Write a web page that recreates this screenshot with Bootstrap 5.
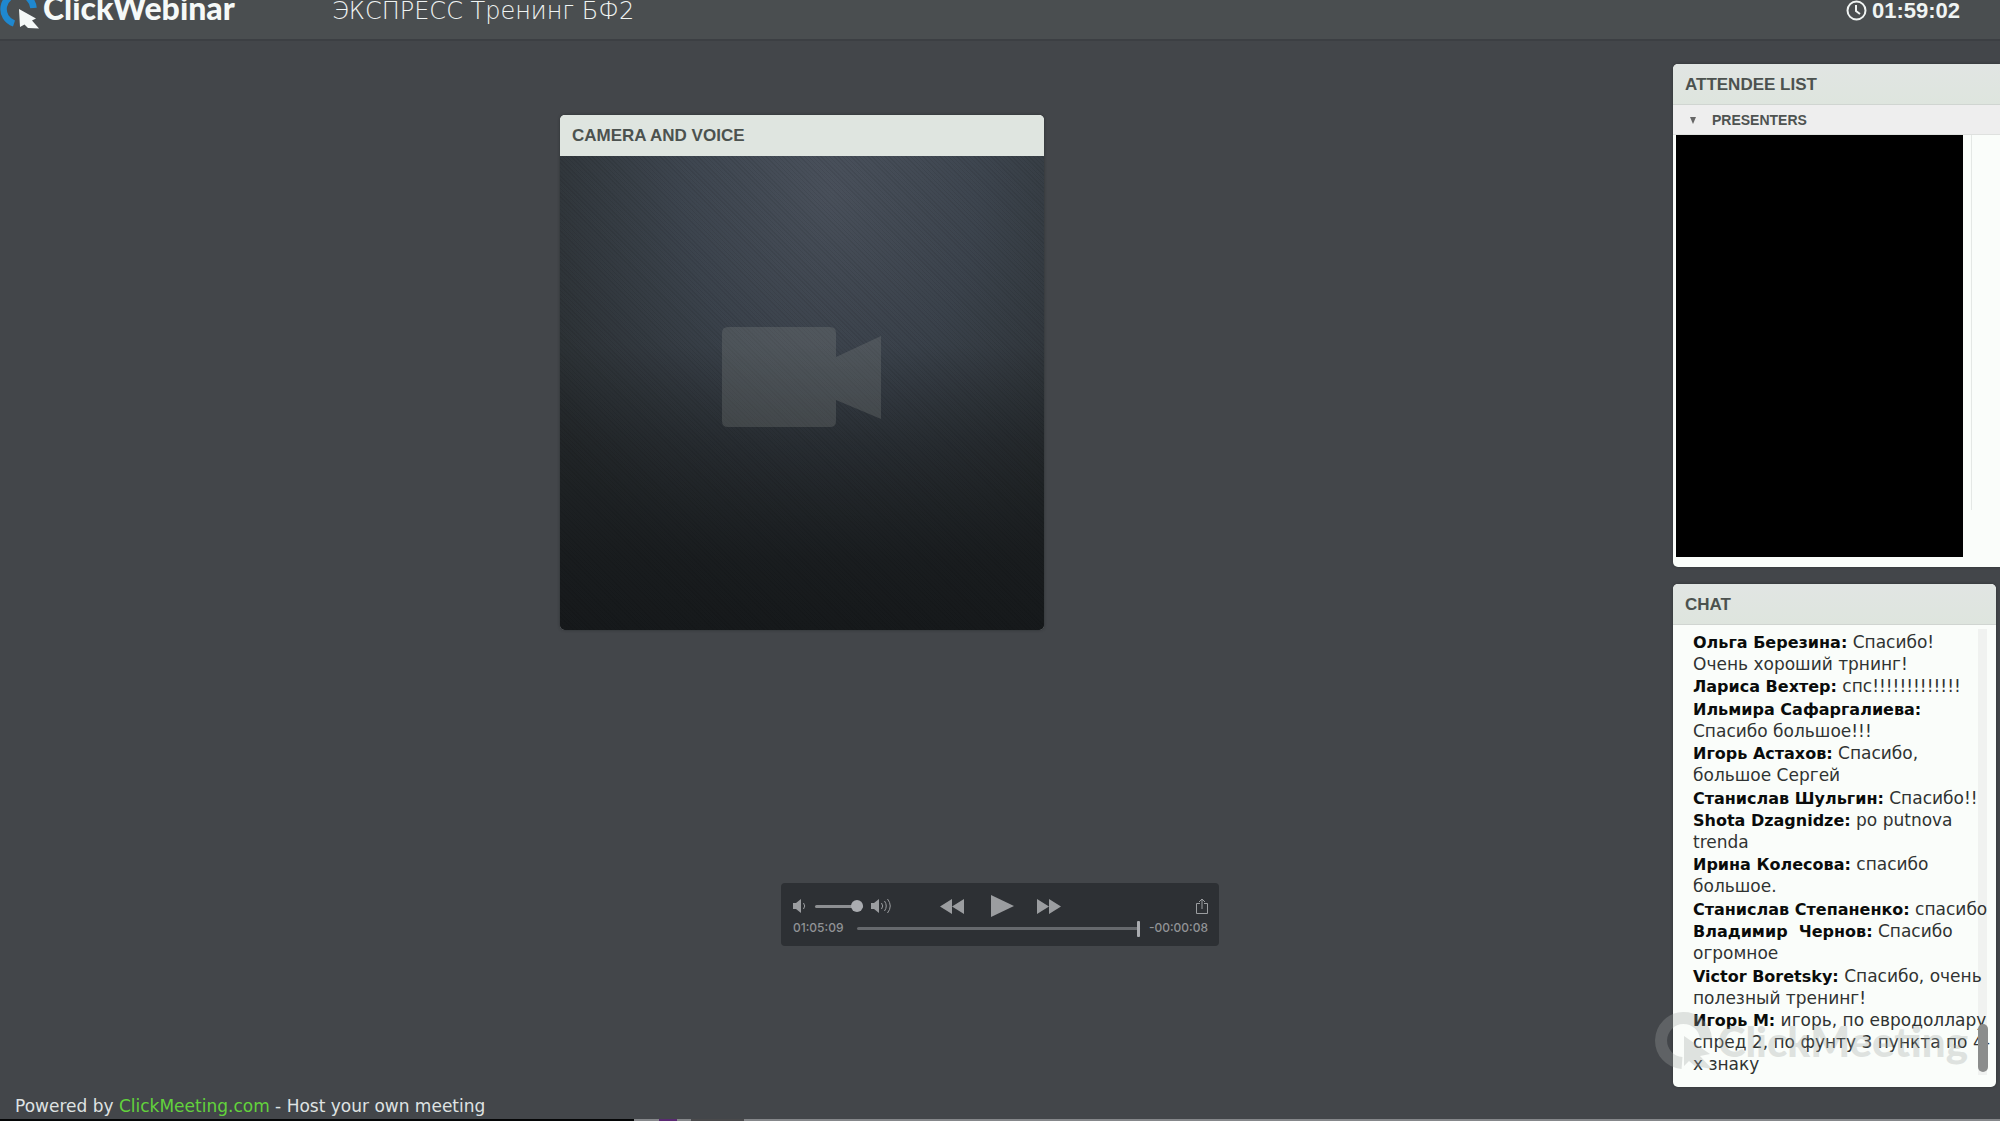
<!DOCTYPE html>
<html lang="ru">
<head>
<meta charset="utf-8">
<meta name="viewport" content="width=device-width, initial-scale=1">
<title>ClickWebinar</title>
<link href="https://cdn.jsdelivr.net/npm/bootstrap@5.3.0/dist/css/bootstrap.min.css" rel="stylesheet">
<style>
  body { background: #43464a; font-family: "Liberation Sans", Arial, sans-serif; overflow-x: hidden; }
  .room { overflow: hidden; }
  .topbar { height: 41px; background: #4a4e50; border-bottom: 2px solid #3c3f43; color: #f0f4f3; padding: 0 40px 0 0; }
  .topbar > * { height: 22px; line-height: 22px; white-space: nowrap; }
  .brand-box { width: 332px; color: #f5f9f8; }
  .brand-box svg { width: 43px; height: 30px; flex: none; }
  .brand-text { font-family: Lato, sans-serif; font-weight: 900; font-size: 32px; line-height: 16px; }
  .room-title { font-family: "DejaVu Sans", sans-serif; font-weight: 200; font-size: 24px; margin: 0; }
  .timer { font-weight: 700; font-size: 22px; gap: 5px; }
  .stage { padding: 74px 0 0 28%; }
  .pane { border-radius: 5px; overflow: hidden; background: #fafdfa; box-shadow: 0 0 3px #2d3033; }
  .pane-title { margin: 0; height: 41px; line-height: 41px; padding: 0 12px; font-size: 17px; font-weight: 700; color: #4c524f; background: linear-gradient(#e1e5e3, #dee5de); border-bottom: 1px solid #d0d5d1; flex: none; }
  .camera { width: 484px; height: 515px; }
  .camera .pane-title { background: #dfe5e0; border: 0; }
  .video-area { padding-bottom: 32px; background:
      repeating-linear-gradient(45deg, rgba(0,0,0,.07) 0 1px, transparent 1px 3px),
      linear-gradient(rgba(22,25,27,0) 0%, rgba(22,25,27,.12) 40%, rgba(22,25,27,.5) 60%, rgba(22,25,27,.88) 85%, #16191b 100%),
      radial-gradient(ellipse 320px 440px at 56% 8%, #4a515c 0%, #3e4650 45%, #31373c 85%, #2c3134 100%); }
  .side { width: 327px; padding-top: 23px; gap: 17px; flex: none; }
  .attendees { height: 503px; border-radius: 5px 0 0 5px; flex: none; }
  .group-row { height: 30px; background: #eeeeee; border: 0; border-bottom: 1px solid #dfe1df; color: #4f5351; font-size: 14px; font-weight: 700; padding: 2px 16px 0; gap: 15px; flex: none; }
  .people { padding: 0 0 0 3px; gap: 8px; }
  .people-list { width: 287px; height: 422px; background: #000; }
  .people-rule { width: 1px; height: 375px; background: #e4e8e5; }
  .chat { width: 323px; height: 503px; }
  .messages { padding: 6px 0 12px 20px; font-family: "DejaVu Sans", sans-serif; font-size: 17px; line-height: 22px; color: #303332; white-space: pre; }
  .messages b { color: #0a0c0b; font-size: 16px; line-height: 20px; }
  .gutter { top: 45px; bottom: 12px; right: 9px; width: 9px; background: #f0f2f0; }
  .thumb { bottom: 15px; right: 8px; width: 10px; height: 48px; border-radius: 5px; background: #8b8d8c; }
  .watermark { right: 32px; bottom: 42px; height: 76px; color: #a0a5a3; opacity: .3; font: 900 42px/60px Lato, sans-serif; gap: 5px; pointer-events: none; }
  .player { left: 50%; bottom: 175px; transform: translateX(-50%); width: 438px; height: 63px; border-radius: 4px; background: #2d3034; color: #9b9da0; padding: 11px 11px 0 12px; }
  .player .btn { --bs-btn-color: #9b9da0; padding: 0; line-height: 0; border: 0; }
  .player svg, .topbar svg { display: block; }
  .controls { height: 24px; }
  .vol-group { width: 147px; gap: 8px; }
  .transport { width: 121px; }
  .times { font: 500 12px/20px Inter, sans-serif; gap: 9px; color: #919396; }
  input[type=range] { appearance: none; -webkit-appearance: none; background: none; margin: 0; display: block; }
  input[type=range]::-webkit-slider-runnable-track { height: 3px; border-radius: 2px; background: #8d8f92; }
  input[type=range]::-webkit-slider-thumb { -webkit-appearance: none; appearance: none; background: #aaacb0; border: 0; }
  .vol { width: 48px; height: 12px; }
  .vol::-webkit-slider-thumb { width: 12px; height: 12px; border-radius: 50%; margin-top: -5px; }
  input.seek[type=range] { height: 16px; flex: 1; min-width: 0; margin-left: 5px; }
  input.seek[type=range]::-webkit-slider-runnable-track { background: #66696d; }
  .seek::-webkit-slider-thumb { width: 3px; height: 16px; margin-top: -6px; border-radius: 1px; }
  .powered { font-family: "DejaVu Sans", sans-serif; font-size: 17px; line-height: 24px; padding: 0 15px 1px; color: #dfe2e2; }
  .powered a { color: #62d23c; text-decoration: none; }
  .edge-strip { height: 2px; background: linear-gradient(90deg, #050607 634px, #85878a 634px 659px, #5a2a72 659px 677px, #85878a 677px 691px, #4a4a4c 691px 744px, #85878a 744px); }
</style>
</head>
<body>
<div class="room d-flex flex-column min-vh-100 position-relative">
  <header class="topbar d-flex align-items-start">
    <div class="brand-box d-flex align-items-start">
      <svg viewBox="0 0 43 30" aria-hidden="true"><path d="M14 23.500A15 15 0 1 1 33.500 8" fill="none" stroke="#1f88cf" stroke-width="6.500"/><path d="M19 9L36 18.500L32 20.500L39 28.500L28 28L24.500 24.500L20 27Z" fill="#f5f9f8"/></svg>
      <span class="brand-text">ClickWebinar</span>
    </div>
    <h1 class="room-title">ЭКСПРЕСС Тренинг БФ2</h1>
    <div class="timer d-flex align-items-start ms-auto">
      <svg width="21" height="21" viewBox="0 0 21 21" fill="none" stroke="currentColor" stroke-width="2" aria-hidden="true"><circle cx="10.500" cy="10.500" r="9"/><path d="M10 5V11L14 14"/></svg>
      <span>01:59:02</span>
    </div>
  </header>

  <main class="d-flex flex-grow-1">
    <div class="stage flex-grow-1">
      <section class="camera pane d-flex flex-column">
        <h2 class="pane-title">CAMERA AND VOICE</h2>
        <div class="video-area flex-grow-1 d-flex align-items-center justify-content-center">
          <svg width="160" height="100" viewBox="0 0 160 100" aria-hidden="true"><path d="M6 0H108Q114 0 114 6V30L159 9V92L114 73V94Q114 100 108 100H6Q0 100 0 94V6Q0 0 6 0Z" fill="#8d8f8d" fill-opacity=".25"/></svg>
        </div>
      </section>
    </div>

    <aside class="side d-flex flex-column">
      <section class="attendees pane d-flex flex-column">
        <h2 class="pane-title">ATTENDEE LIST</h2>
        <button type="button" class="group-row d-flex align-items-center">
          <svg width="8" height="7" viewBox="0 0 8 7" aria-hidden="true"><path d="M1 0H7L4 7Z" fill="#666"/></svg>
          PRESENTERS
        </button>
        <div class="people d-flex">
          <div class="people-list"></div>
          <div class="people-rule"></div>
        </div>
      </section>

      <section class="chat pane position-relative d-flex flex-column">
        <h2 class="pane-title">CHAT</h2>
        <div class="gutter position-absolute"></div>
        <div class="messages position-relative flex-grow-1 d-flex flex-column justify-content-between"><div><b>Ольга Березина:</b> Спасибо!
Очень хороший трнинг!</div><div><b>Лариса Вехтер:</b> спс!!!!!!!!!!!!!</div><div><b>Ильмира Сафаргалиева:</b>
Спасибо большое!!!</div><div><b>Игорь Астахов:</b> Спасибо,
большое Сергей</div><div><b>Станислав Шульгин:</b> Спасибо!!</div><div><b>Shota Dzagnidze:</b> po putnova
trenda</div><div><b>Ирина Колесова:</b> спасибо
большое.</div><div><b>Станислав Степаненко:</b> спасибо</div><div><b>Владимир  Чернов:</b> Спасибо
огромное</div><div><b>Victor Boretsky:</b> Спасибо, очень
полезный тренинг!</div><div><b>Игорь М:</b> игорь, по евродоллару
спред 2, по фунту 3 пункта по 4-
х знаку</div></div>
        <div class="thumb position-absolute"></div>
      </section>
    </aside>
  </main>

  <div class="watermark position-absolute d-flex align-items-center" aria-hidden="true">
    <svg width="58" height="58" viewBox="0 0 58 58"><path d="M27 51A22.500 22.500 0 1 1 51 27" fill="none" stroke="currentColor" stroke-width="12"/><path d="M29 24L55 42L45 44L57 57L40 54L34 49L29 54Z" fill="currentColor"/></svg>
    <span>ClickMeeting</span>
  </div>

  <div class="player position-absolute">
    <div class="controls d-flex align-items-center">
      <div class="vol-group d-flex align-items-center">
        <button type="button" class="btn" aria-label="Mute"><svg width="14" height="14" viewBox="0 0 14 14"><path d="M0 4H3L8 0V14L3 10H0Z" fill="currentColor"/><path d="M10.500 4Q13 7 10.500 10" fill="none" stroke="currentColor"/></svg></button>
        <input type="range" class="vol" aria-label="Volume" min="0" max="100" value="100">
        <button type="button" class="btn" aria-label="Full volume"><svg width="21" height="16" viewBox="0 0 21 16"><path d="M0 5H3L8 1V15L3 11H0Z" fill="currentColor"/><path d="M10.500 5Q13 8 10.500 11M13.500 3Q17 8 13.500 13M16.500 1Q22 8 16.500 15" fill="none" stroke="currentColor"/></svg></button>
      </div>
      <div class="transport d-flex align-items-center justify-content-between">
        <button type="button" class="btn" aria-label="Rewind"><svg width="24" height="15" viewBox="0 0 24 15"><path d="M12 0V15L0 7.500ZM24 0V15L12 7.500Z" fill="currentColor"/></svg></button>
        <button type="button" class="btn" aria-label="Play"><svg width="27" height="22" viewBox="0 0 27 22"><path d="M4 0L27 11L4 22Z" fill="currentColor"/></svg></button>
        <button type="button" class="btn" aria-label="Fast forward"><svg width="24" height="15" viewBox="0 0 24 15"><path d="M0 0V15L12 7.500ZM12 0V15L24 7.500Z" fill="currentColor"/></svg></button>
      </div>
      <button type="button" class="btn ms-auto" aria-label="Share"><svg width="12" height="16" viewBox="0 0 12 16" fill="none" stroke="currentColor"><path d="M4 5.500H.5V15.500H11.500V5.500H8M6 11V1M3 4L6 1L9 4"/></svg></button>
    </div>
    <div class="times d-flex align-items-center">
      <span>01:05:09</span>
      <input type="range" class="seek" aria-label="Position" min="0" max="100" value="100">
      <span>-00:00:08</span>
    </div>
  </div>

  <footer>
    <div class="powered">Powered by <a href="#">ClickMeeting.com</a> - Host your own meeting</div>
    <div class="edge-strip"></div>
  </footer>
</div>
<script src="https://cdn.jsdelivr.net/npm/bootstrap@5.3.0/dist/js/bootstrap.bundle.min.js"></script>
</body>
</html>
